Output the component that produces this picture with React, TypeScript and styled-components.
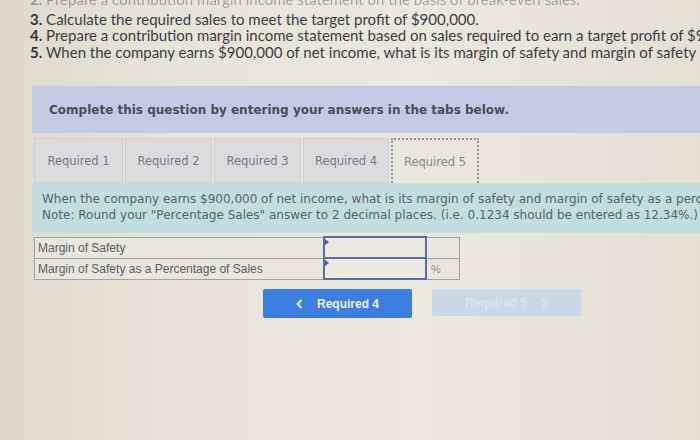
import React from 'react';
import styled, { createGlobalStyle } from 'styled-components';

const GlobalStyle = createGlobalStyle`
  html, body {
    margin: 0;
    padding: 0;
  }
  body {
    width: 700px;
    height: 440px;
    overflow: hidden;
    background: linear-gradient(90deg, #dedacd 0%, #e7e4d9 25%, #ebe8df 60%, #e4e0d4 100%);
  }
`

const Page = styled.div`
  width: 700px;
  height: 440px;
  overflow: hidden;
`

const Questions = styled.ol`
  list-style: none;
  margin: -9px 0 0 0;
  padding: 0 0 0 30px;
  font-family: Lato, "Open Sans", sans-serif;
  font-size: 15px;
  line-height: 16.5px;
  color: #3d3d3f;
  white-space: nowrap;
`

const Question = styled.li<{ $faded?: boolean }>`
  opacity: ${p => (p.$faded ? 0.4 : 1)};
  filter: ${p => (p.$faded ? 'blur(0.7px)' : 'none')};
  margin-bottom: ${p => (p.$faded ? 3 : 0)}px;
  b {
    font-weight: 700;
    color: #333;
  }
`

const Work = styled.div`
  margin: 26px 0 0 32px;
  display: flex;
  flex-direction: column;
`

const Instruction = styled.div`
  height: 47px;
  display: flex;
  align-items: center;
  padding-left: 17px;
  background: #c4cae4;
  font-family: "DejaVu Sans", Verdana, sans-serif;
  font-weight: 700;
  font-size: 12px;
  color: #4a4c58;
`

const TabRow = styled.div`
  display: flex;
  margin: 5px 0 0 2px;
  gap: 2px;
`

const Tab = styled.div<{ $active?: boolean; $w: number }>`
  box-sizing: border-box;
  width: ${p => p.$w}px;
  height: 45px;
  display: flex;
  align-items: center;
  justify-content: center;
  font-family: "DejaVu Sans", Verdana, sans-serif;
  font-size: 11.5px;
  color: ${p => (p.$active ? '#8a8a86' : '#747888')};
  background: ${p => (p.$active ? '#e9e6dc' : '#dcdcdf')};
  border: ${p => (p.$active ? '2px dotted #8e90a4' : '1px solid #cfcfd0')};
  border-bottom: ${p => (p.$active ? 'none' : '1px solid #cfcfd0')};
`

const Prompt = styled.div`
  height: 50px;
  box-sizing: border-box;
  padding: 8px 0 0 10px;
  background: #c2dee1;
  font-family: "DejaVu Sans", Verdana, sans-serif;
  font-size: 12px;
  line-height: 16px;
  color: #5a6168;
  white-space: nowrap;
  overflow: hidden;
`

const Table = styled.table`
  margin: 3px 0 0 2px;
  width: 426px;
  table-layout: fixed;
  border-collapse: collapse;
  font-family: "Liberation Sans", Arial, sans-serif;
  font-size: 12px;
  color: #5c5c66;
`

const Label = styled.td`
  width: 284px;
  height: 20px;
  padding: 0 0 0 3px;
  border: 1px solid #a2a2a6;
  background: #e9e6de;
  white-space: nowrap;
`

const InputCell = styled.td`
  width: 100px;
  padding: 0;
  border: 2px solid #5a6aa8;
  background: #ece9e2;
  position: relative;
`

const Marker = styled.span`
  position: absolute;
  left: 0;
  top: 1px;
  width: 0;
  height: 0;
  border-top: 3px solid transparent;
  border-bottom: 3px solid transparent;
  border-left: 4px solid #3f5bb5;
`

const Unit = styled.td`
  width: 28px;
  padding: 0 0 0 4px;
  border: 1px solid #a2a2a6;
  background: #e9e6de;
  color: #8a8a8e;
  font-size: 11px;
`

const Nav = styled.div`
  display: flex;
  gap: 20px;
  margin: 9px 0 0 231px;
`

const NavButton = styled.div<{ $disabled?: boolean }>`
  width: 149px;
  height: ${p => (p.$disabled ? 27 : 29)}px;
  display: flex;
  align-items: center;
  justify-content: center;
  gap: 14px;
  border-radius: 2px;
  font-family: "Liberation Sans", Arial, sans-serif;
  font-weight: 700;
  font-size: 12px;
  color: ${p => (p.$disabled ? '#dbe4ee' : '#eef3fb')};
  background: ${p => (p.$disabled ? '#c8d8e6' : '#3c7de0')};
`

const Chevron = ({ dir }: { dir: 'left' | 'right' }) => (
  <svg width="7" height="10" viewBox="0 0 7 10">
    <path
      d={dir === 'left' ? 'M5.5 1 L1.5 5 L5.5 9' : 'M1.5 1 L5.5 5 L1.5 9'}
      fill="none"
      stroke="currentColor"
      strokeWidth="1.8"
    />
  </svg>
)

const tabs = [
  { label: 'Required 1', w: 89 },
  { label: 'Required 2', w: 87 },
  { label: 'Required 3', w: 87 },
  { label: 'Required 4', w: 86 },
  { label: 'Required 5', w: 88, active: true },
]

export default function App() {
  return (
    <Page>
      <GlobalStyle />
      <Questions>
        <Question $faded><b>2.</b> Prepare a contribution margin income statement on the basis of break-even sales.</Question>
        <Question><b>3.</b> Calculate the required sales to meet the target profit of $900,000.</Question>
        <Question><b>4.</b> Prepare a contribution margin income statement based on sales required to earn a target profit of $900,000.</Question>
        <Question><b>5.</b> When the company earns $900,000 of net income, what is its margin of safety and margin of safety as a percentage of sales?</Question>
      </Questions>
      <Work>
        <Instruction>Complete this question by entering your answers in the tabs below.</Instruction>
        <TabRow>
          {tabs.map(t => (
            <Tab key={t.label} $w={t.w} $active={t.active}>{t.label}</Tab>
          ))}
        </TabRow>
        <Prompt>
          When the company earns $900,000 of net income, what is its margin of safety and margin of safety as a percentage of sales?
          <br />
          Note: Round your "Percentage Sales" answer to 2 decimal places. (i.e. 0.1234 should be entered as 12.34%.)
        </Prompt>
        <Table>
          <tbody>
            <tr>
              <Label>Margin of Safety</Label>
              <InputCell><Marker /></InputCell>
              <Unit></Unit>
            </tr>
            <tr>
              <Label>Margin of Safety as a Percentage of Sales</Label>
              <InputCell><Marker /></InputCell>
              <Unit>%</Unit>
            </tr>
          </tbody>
        </Table>
        <Nav>
          <NavButton>
            <Chevron dir="left" />
            Required 4
          </NavButton>
          <NavButton $disabled>
            Required 5
            <Chevron dir="right" />
          </NavButton>
        </Nav>
      </Work>
    </Page>
  );
}
